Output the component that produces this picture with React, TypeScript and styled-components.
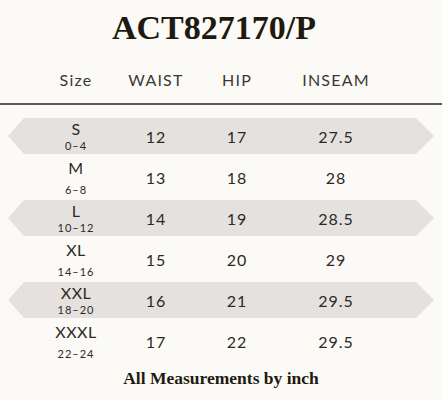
import React from 'react'
import styled, { createGlobalStyle } from 'styled-components'

const SIZES = [
    { size: 'S', range: '0–4', waist: '12', hip: '17', inseam: '27.5' },
    { size: 'M', range: '6–8', waist: '13', hip: '18', inseam: '28' },
    { size: 'L', range: '10–12', waist: '14', hip: '19', inseam: '28.5' },
    { size: 'XL', range: '14–16', waist: '15', hip: '20', inseam: '29' },
    { size: 'XXL', range: '18–20', waist: '16', hip: '21', inseam: '29.5' },
    { size: 'XXXL', range: '22–24', waist: '17', hip: '22', inseam: '29.5' },
]

const GlobalStyle = createGlobalStyle`
    html, body {
        margin: 0;
        padding: 0;
        background: #fcfaf6;
    }
`

const Page = styled.div`
    width: 442px;
    height: 400px;
    background: #fcfaf6;
    color: #2b2926;
    font-family: Lato, "Noto Sans", sans-serif;
    overflow: hidden;
`

const Title = styled.h1`
    margin: 0;
    padding: 8px 14px 8px 0;
    height: 40px;
    line-height: 40px;
    text-align: center;
    font-family: "Liberation Serif", "DejaVu Serif", serif;
    font-weight: 700;
    font-size: 34px;
    color: #1e1a12;
`

const Columns = styled.div`
    display: grid;
    grid-template-columns: 80px 80px 82px 116px;
    align-items: center;
    justify-items: center;
`

const Header = styled(Columns)`
    height: 47px;
    padding-left: 36px;
    font-weight: 400;
    font-size: 16px;
    letter-spacing: 1.2px;
    color: #3a3835;
`

const Divider = styled.div`
    height: 2px;
    background: #5d5b58;
`

const Table = styled.div`
    margin-top: 13px;
    padding: 0 8px;
`

const Row = styled(Columns)<{ $shaded: boolean }>`
    height: ${p => (p.$shaded ? 36 : 46)}px;
    padding-left: 28px;
    background: ${p => (p.$shaded ? '#e4e1de' : 'transparent')};
    clip-path: polygon(16px 0, calc(100% - 18px) 0, 100% 50%, calc(100% - 18px) 100%, 16px 100%, 0 50%);
`

const SizeCell = styled.div<{ $gap: number }>`
    display: flex;
    flex-direction: column;
    align-items: center;
    gap: ${p => p.$gap}px;
`

const SizeName = styled.span`
    font-size: 16px;
    line-height: 16px;
    letter-spacing: 0.5px;
`

const SizeRange = styled.span`
    font-size: 11px;
    line-height: 11px;
    font-weight: 400;
    letter-spacing: 1px;
    color: #2b2926;
`

const Value = styled.span`
    font-size: 16px;
    letter-spacing: 1px;
`

const Footer = styled.div`
    margin-top: 4px;
    height: 20px;
    line-height: 20px;
    text-align: center;
    font-family: "Liberation Serif", "DejaVu Serif", serif;
    font-weight: 700;
    font-size: 17.5px;
    color: #1e1a12;
`

export default function App() {
    return (
        <Page>
            <GlobalStyle />
            <Title>ACT827170/P</Title>
            <Header>
                <span>Size</span>
                <span>WAIST</span>
                <span>HIP</span>
                <span>INSEAM</span>
            </Header>
            <Divider />
            <Table>
                {SIZES.map((row, i) => (
                    <Row key={row.size} $shaded={i % 2 === 0}>
                        <SizeCell $gap={i % 2 === 0 ? 3 : 8}>
                            <SizeName>{row.size}</SizeName>
                            <SizeRange>{row.range}</SizeRange>
                        </SizeCell>
                        <Value>{row.waist}</Value>
                        <Value>{row.hip}</Value>
                        <Value>{row.inseam}</Value>
                    </Row>
                ))}
            </Table>
            <Footer>All Measurements by inch</Footer>
        </Page>
    )
}
